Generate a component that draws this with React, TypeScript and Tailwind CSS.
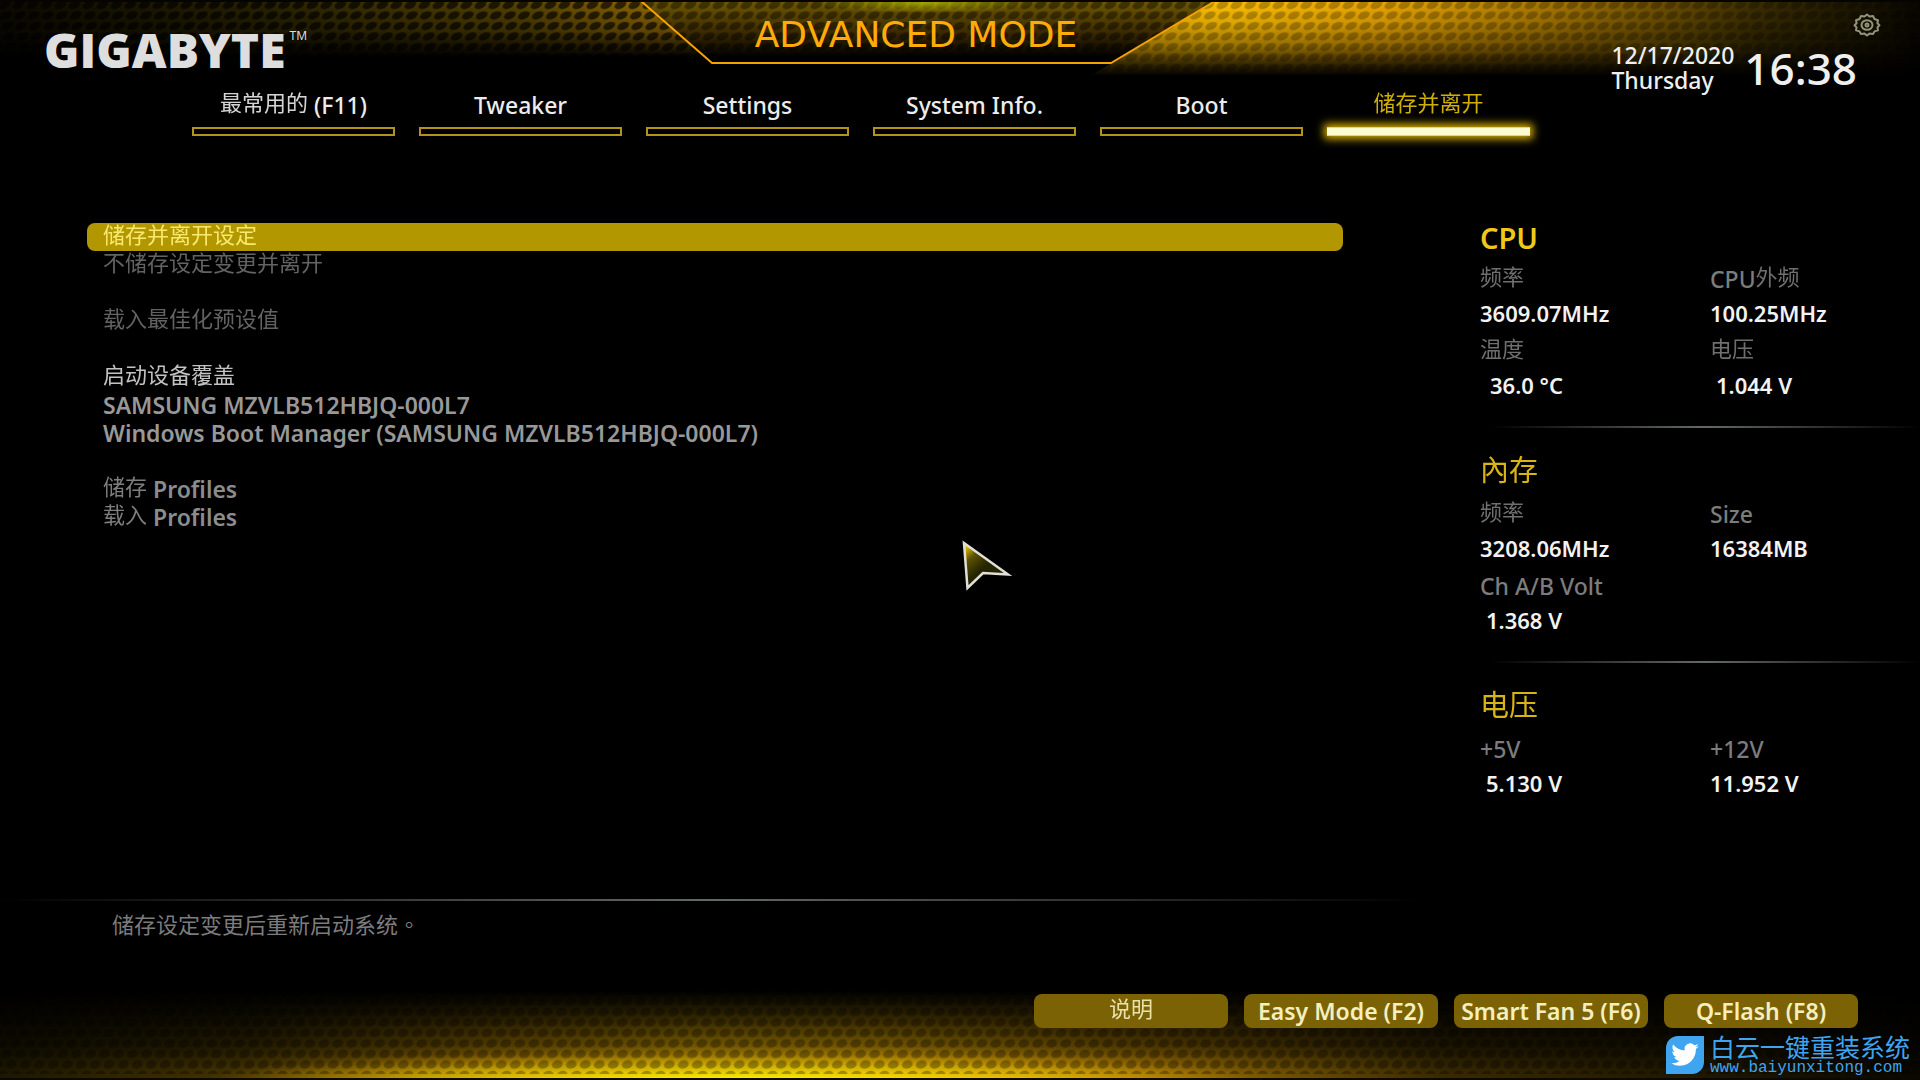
import type { ReactNode } from "react";

const tabs = ["最常用的 (F11)", "Tweaker", "Settings", "System Info.", "Boot", "储存并离开"];

const menu: { label: string; tone: string }[][] = [
  [
    { label: "储存并离开设定", tone: "bg-[#b39700] text-[#fff27a]" },
    { label: "不储存设定变更并离开", tone: "text-[#6e6e6e]" },
  ],
  [{ label: "载入最佳化预设值", tone: "text-[#6e6e6e]" }],
  [
    { label: "启动设备覆盖", tone: "text-[#d8d8d8]" },
    { label: "SAMSUNG MZVLB512HBJQ-000L7", tone: "text-[#989898]" },
    { label: "Windows Boot Manager (SAMSUNG MZVLB512HBJQ-000L7)", tone: "text-[#989898]" },
  ],
  [
    { label: "储存 Profiles", tone: "text-[#8c8c8c]" },
    { label: "载入 Profiles", tone: "text-[#8c8c8c]" },
  ],
];

interface Reading {
  label: string;
  value: string;
  indent?: string;
}

const sections: { title: string; readings: Reading[] }[] = [
  {
    title: "CPU",
    readings: [
      { label: "频率", value: "3609.07MHz" },
      { label: "CPU外频", value: "100.25MHz" },
      { label: "温度", value: "36.0 °C", indent: "pl-2.5" },
      { label: "电压", value: "1.044 V", indent: "pl-1.5" },
    ],
  },
  {
    title: "內存",
    readings: [
      { label: "频率", value: "3208.06MHz" },
      { label: "Size", value: "16384MB" },
      { label: "Ch A/B Volt", value: "1.368 V", indent: "pl-1.5" },
    ],
  },
  {
    title: "电压",
    readings: [
      { label: "+5V", value: "5.130 V", indent: "pl-1.5" },
      { label: "+12V", value: "11.952 V" },
    ],
  },
];

const actions = ["说明", "Easy Mode (F2)", "Smart Fan 5 (F6)", "Q-Flash (F8)"];

// Chinese runs sit a little above the Latin baseline and use a lighter weight
function Mixed({ text, size = "text-[22px]" }: { text: string; size?: string }) {
  return (
    <>
      {text.split(/([\u4e00-\u9fff]+)/).map((part, i) =>
        /[\u4e00-\u9fff]/.test(part) ? (
          <span
            key={i}
            className={`align-[3px] font-['Noto_Sans_CJK_SC',sans-serif] font-normal opacity-90 ${size} leading-[0px]`}
          >
            {part}
          </span>
        ) : (
          part
        )
      )}
    </>
  );
}

// Two staggered rows of cells, darkening whatever glow lies below
function Mesh({ id, slant }: { id: string; slant: number }) {
  return (
    <pattern id={id} width="14" height="21" patternUnits="userSpaceOnUse" patternTransform={`skewX(${slant})`}>
      <ellipse cx="7" cy="5" rx="5.400" ry="4.200" />
      <ellipse cx="0" cy="15.500" rx="5.400" ry="4.200" />
      <ellipse cx="14" cy="15.500" rx="5.400" ry="4.200" />
    </pattern>
  );
}

function HeaderArt() {
  return (
    <svg className="h-[76px] w-full [grid-area:1/1]" viewBox="0 0 1920 76" preserveAspectRatio="none" aria-hidden="true">
      <defs>
        <Mesh id="meshTop" slant={-28} />
        <linearGradient id="leftGlow">
          <stop offset="0" stopColor="#0c0a00" />
          <stop offset="0.4" stopColor="#2c2400" />
          <stop offset="0.75" stopColor="#5a4600" />
          <stop offset="1" stopColor="#a87800" />
        </linearGradient>
        <linearGradient id="rightGlow">
          <stop offset="0" stopColor="#f0b000" />
          <stop offset="0.15" stopColor="#ffc000" />
          <stop offset="0.35" stopColor="#eaa600" />
          <stop offset="0.55" stopColor="#a87800" />
          <stop offset="0.8" stopColor="#3c2e00" />
          <stop offset="1" stopColor="#080600" />
        </linearGradient>
        <linearGradient id="bannerGlow" x2="0" y2="1">
          <stop offset="0" stopColor="#6e5800" />
          <stop offset="0.5" stopColor="#3c2a00" />
          <stop offset="0.9" stopColor="#000" />
        </linearGradient>
        <radialGradient id="bannerShine">
          <stop offset="0" stopColor="#b8b800" stopOpacity="0.8" />
          <stop offset="1" stopColor="#b8b800" stopOpacity="0" />
        </radialGradient>
        <linearGradient id="fadeLeft" x2="0" y2="1">
          <stop offset="0" stopColor="#fff" />
          <stop offset="0.4" stopColor="#aaa" />
          <stop offset="0.75" stopColor="#000" />
        </linearGradient>
        <linearGradient id="fadeRight" x2="0" y2="1">
          <stop offset="0" stopColor="#fff" />
          <stop offset="0.3" stopColor="#ddd" />
          <stop offset="0.6" stopColor="#999" />
          <stop offset="0.85" stopColor="#333" />
          <stop offset="1" stopColor="#000" />
        </linearGradient>
        <mask id="maskLeft">
          <rect width="1920" height="76" fill="url(#fadeLeft)" />
        </mask>
        <mask id="maskRight">
          <rect width="1920" height="76" fill="url(#fadeRight)" />
        </mask>
      </defs>
      <g mask="url(#maskLeft)">
        <path d="M0 1H641L705 57V76H0Z" fill="url(#leftGlow)" />
        <path d="M0 1H641L705 57V76H0Z" fill="url(#meshTop)" opacity="0.65" />
      </g>
      <g mask="url(#maskRight)">
        <path d="M1215 1H1920V76H1090V76Z" fill="url(#rightGlow)" />
        <path d="M1215 1H1920V76H1090V76Z" fill="url(#meshTop)" opacity="0.25" />
      </g>
      <path d="M641 1L712 63H1111L1215 1Z" fill="url(#bannerGlow)" />
      <path d="M641 1L712 63H1111L1215 1Z" fill="url(#meshTop)" opacity="0.4" />
      <ellipse cx="925" cy="3" rx="110" ry="10" fill="url(#bannerShine)" />
      <path d="M641 1L712 63H1111L1215 1" fill="none" stroke="#f5a300" strokeWidth="2" />
      <rect width="1920" height="2" fill="#050400" />
    </svg>
  );
}

function FooterArt() {
  return (
    <svg className="h-[94px] w-full self-end [grid-area:1/1]" viewBox="0 0 1920 94" preserveAspectRatio="none" aria-hidden="true">
      <defs>
        <Mesh id="meshBottom" slant={-12} />
        <linearGradient id="floor">
          <stop offset="0" stopColor="#1e1800" />
          <stop offset="0.13" stopColor="#4a3800" />
          <stop offset="0.26" stopColor="#b88600" />
          <stop offset="0.36" stopColor="#ffc400" />
          <stop offset="0.46" stopColor="#ffc000" />
          <stop offset="0.6" stopColor="#a87800" />
          <stop offset="0.75" stopColor="#3c2c00" />
          <stop offset="1" stopColor="#0a0800" />
        </linearGradient>
        <linearGradient id="floorFade" x2="0" y2="1">
          <stop offset="0.05" stopColor="#000" />
          <stop offset="0.3" stopColor="#2a2a2a" />
          <stop offset="0.65" stopColor="#727272" />
          <stop offset="0.85" stopColor="#d0d0d0" />
          <stop offset="1" stopColor="#fff" />
        </linearGradient>
        <mask id="floorMask">
          <rect width="1920" height="94" fill="url(#floorFade)" />
        </mask>
        <radialGradient id="hot">
          <stop offset="0" stopColor="#fff200" />
          <stop offset="0.6" stopColor="#ffdc00" stopOpacity="0.5" />
          <stop offset="1" stopColor="#ffb000" stopOpacity="0" />
        </radialGradient>
      </defs>
      <g mask="url(#floorMask)">
        <rect width="1920" height="93" fill="url(#floor)" />
        <ellipse cx="730" cy="93" rx="520" ry="30" fill="url(#hot)" />
        <rect width="1920" height="88" fill="url(#meshBottom)" opacity="0.3" />
      </g>
      <rect y="92" width="1920" height="2" fill="#0a0800" />
    </svg>
  );
}

function GearIcon() {
  return (
    <svg className="h-[24px] w-[28px]" viewBox="0 0 28 24" fill="none" stroke="#92937c" aria-hidden="true">
      <path
        strokeWidth="2"
        strokeLinejoin="round"
        d="M11.5 3.5 14 1.5 16.5 3.5 20 3 21.5 6 25 7.2 24.4 10.2 26.5 12.2 24.4 14.4 25 17.2 21.5 18.4 20 21 16.5 20.6 14 22.5 11.5 20.6 8 21 6.5 18.4 3 17.2 3.6 14.4 1.5 12.2 3.6 10.2 3 7.2 6.5 6 8 3Z"
      />
      <ellipse cx="14" cy="12" rx="5.500" ry="4.800" strokeWidth="2" />
      <circle cx="14" cy="12" r="1.500" strokeWidth="2" />
    </svg>
  );
}

function Pointer() {
  return (
    <svg className="pointer-events-none absolute top-[538px] left-[960px] h-[56px] w-[54px]" viewBox="0 0 54 56" aria-hidden="true">
      <defs>
        <linearGradient id="pointerFill" x2="0.5" y2="0.6">
          <stop offset="0.1" stopColor="#f0c800" />
          <stop offset="0.45" stopColor="#5c5200" />
          <stop offset="0.9" stopColor="#242400" />
        </linearGradient>
      </defs>
      <path d="M4 5 48 36.500 23 35 7.500 50Z" fill="url(#pointerFill)" stroke="#e0e0d8" strokeWidth="2.500" />
    </svg>
  );
}

function Divider({ className }: { className: string }) {
  return <div className={`h-0.5 bg-linear-to-r from-transparent via-[#626a68] to-transparent ${className}`} />;
}

function Sidebar() {
  return (
    <aside className="w-[440px] shrink-0">
      {sections.map((section, i) => (
        <section key={section.title}>
          {i > 0 && <Divider className="mt-6 mb-[25px] ml-2.5" />}
          <h2 className="h-[44px] text-[29px] leading-[40px] font-semibold text-[#f0c818]">
            <Mixed text={section.title} size="text-[29px]" />
          </h2>
          <dl className="grid grid-cols-[230px_1fr] gap-y-1">
            {section.readings.map((r) => (
              <div key={r.label} className="leading-[34px]">
                <dt className="h-[34px] text-[23px] font-medium text-[#7c7c7c]">
                  <Mixed text={r.label} />
                </dt>
                <dd className={`h-[34px] text-[22px] font-semibold text-[#f2f2f2] ${r.indent ?? ""}`}>{r.value}</dd>
              </div>
            ))}
          </dl>
        </section>
      ))}
    </aside>
  );
}

function Watermark({ children }: { children: ReactNode }) {
  return (
    <a href="#baiyun" className="flex items-center gap-1.5 self-end pr-2.5 pb-1 text-[#3fa5f0]">
      <span className="flex size-[38px] items-center justify-center rounded-tl-xl rounded-br-xl bg-[#3fa5f0]">
        <svg className="size-[30px]" viewBox="0 0 24 24" fill="#fff" aria-hidden="true">
          <path d="M23 4.900a9 9 0 0 1-2.600.7 4.500 4.500 0 0 0 2-2.500 9 9 0 0 1-2.900 1.100 4.500 4.500 0 0 0-7.700 4.100A12.800 12.800 0 0 1 2.500 3.600a4.500 4.500 0 0 0 1.400 6 4.500 4.500 0 0 1-2-.6 4.500 4.500 0 0 0 3.600 4.500 4.500 4.500 0 0 1-2 .1 4.500 4.500 0 0 0 4.200 3.100A9.100 9.100 0 0 1 1 18.600a12.800 12.800 0 0 0 6.900 2c8.400 0 13.100-7.100 12.800-13.400A9 9 0 0 0 23 4.900Z" />
        </svg>
      </span>
      {children}
    </a>
  );
}

export default function App() {
  return (
    <div className="relative grid min-h-screen bg-black font-['Noto_Sans','Noto_Sans_CJK_SC',sans-serif] text-[23px] leading-7">
      <HeaderArt />
      <FooterArt />

      <div className="flex flex-col [grid-area:1/1]">
        <header className="flex h-[91px] items-start">
          <div className="flex w-1/3 items-start gap-1 pt-7 pl-11 text-[#dedede]">
            <span className="font-['Open_Sans',sans-serif] text-[48px] leading-[44px] font-extrabold">GIGABYTE</span>
            <span className="text-xs">TM</span>
          </div>
          <h1 className="w-[30%] pt-[15px] pr-6 text-center font-['DejaVu_Sans',sans-serif] text-[36px] leading-[40px] whitespace-nowrap text-[#ffab0a]">
            ADVANCED MODE
          </h1>
          <div className="flex flex-1 flex-col items-end pt-[13px] pr-[39px]">
            <button type="button" aria-label="Settings">
              <GearIcon />
            </button>
            <div className="mt-1.5 flex items-center gap-2.5 pr-6 font-medium text-[#efefef]">
              <div className="leading-[25px]">
                <p>12/17/2020</p>
                <p>Thursday</p>
              </div>
              <time className="text-[44px] leading-[50px]">16:38</time>
            </div>
          </div>
        </header>

        <nav className="flex gap-6 px-48">
          {tabs.map((tab) => {
            const active = tab === "储存并离开";
            return (
              <button
                key={tab}
                type="button"
                className={`flex w-[203px] flex-col items-center gap-2 font-medium ${active ? "text-[#e6c200]" : "text-[#ececec]"}`}
              >
                <span className="h-7">
                  <Mixed text={tab} />
                </span>
                <span
                  className={
                    active
                      ? "h-[9px] w-full border-y border-[#ffe000] bg-[#fffbd0] shadow-[0_0_8px_3px_#d9b400]"
                      : "h-[9px] w-full border-2 border-[#b3941a]"
                  }
                />
              </button>
            );
          })}
        </nav>

        <main className="flex flex-1 items-start pt-[82px]">
          <ul className="mt-[5px] mr-[137px] ml-[87px] flex flex-1 flex-col gap-7">
            {menu.map((group) => (
              <li key={group[0].label}>
                {group.map((item) => (
                  <button
                    key={item.label}
                    type="button"
                    className={`block h-7 w-full rounded-lg px-4 text-left leading-6 font-semibold ${item.tone}`}
                  >
                    <Mixed text={item.label} />
                  </button>
                ))}
              </li>
            ))}
          </ul>
          <Sidebar />
        </main>

        <Divider className="w-[1420px] max-w-full" />
        <p className="h-[93px] pt-2 pl-28 font-['Noto_Sans_CJK_TC',sans-serif] text-[22px] text-[#7c7c7c]">
          储存设定变更后重新启动系统。
        </p>

        <footer className="flex h-[86px] flex-col justify-between">
          <div className="flex justify-end gap-4 pr-[62px]">
            {actions.map((action) => (
              <button
                key={action}
                type="button"
                className="h-[34px] w-[194px] rounded-lg bg-[#7a6205] font-semibold whitespace-nowrap text-[#f5efbe]"
              >
                <Mixed text={action} />
              </button>
            ))}
          </div>
          <Watermark>
            <span className="flex flex-col">
              <span className="font-['Noto_Sans_CJK_SC',sans-serif] text-[25px] leading-[27px]">白云一键重装系统</span>
              <span className="font-['Liberation_Mono',monospace] text-base leading-4">www.baiyunxitong.com</span>
            </span>
          </Watermark>
        </footer>
      </div>

      <Pointer />
    </div>
  );
}
